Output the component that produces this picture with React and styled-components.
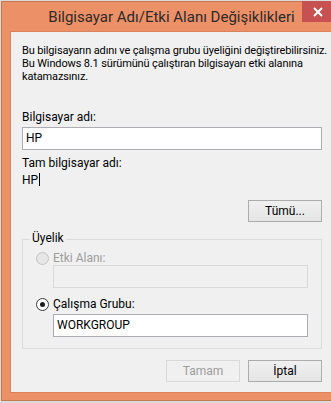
import React from 'react'
import styled, { createGlobalStyle } from 'styled-components'

const GlobalStyle = createGlobalStyle`
  html, body {
    margin: 0;
    padding: 0;
    background: #dadada;
    overflow: hidden;
  }
  body {
    font-family: Roboto, "Liberation Sans", Arial, sans-serif;
    font-size: 12px;
    color: #000;
  }
`

const Window = styled.div`
  position: relative;
  margin: 1px 0 0 1px;
  width: 341px;
  box-sizing: border-box;
  border: 1px solid #c9774f;
  background: #ec9068;
  padding: 0 8px 7px 8px;
  display: flex;
  flex-direction: column;
`

const TitleBar = styled.div`
  height: 29px;
  box-sizing: border-box;
  padding-top: 2px;
  line-height: 27px;
  text-align: center;
  font-size: 15px;
  color: #2e2a28;
  white-space: nowrap;
`

const CloseButton = styled.div`
  position: absolute;
  top: -1px;
  right: 7px;
  width: 32px;
  height: 21px;
  background: #c75050;
  display: flex;
  align-items: center;
  justify-content: center;
`

const Panel = styled.div`
  border: 1px solid #d9825b;
  background: #f0f0f0;
  padding: 12px 9px 10px 11px;
  display: flex;
  flex-direction: column;
  width: 300px;
`

const Intro = styled.div`
  font-size: 11px;
  letter-spacing: -0.14px;
  line-height: 13px;
  white-space: nowrap;
`

const Label = styled.div`
  margin-top: ${p => p.$top || 0}px;
  line-height: 13px;
  white-space: nowrap;
  color: ${p => (p.$disabled ? '#9d9d9d' : '#000')};
`

const TextBox = styled.div`
  margin-top: ${p => p.$top || 0}px;
  margin-left: ${p => p.$left || 0}px;
  width: ${p => p.$width}px;
  height: 23px;
  box-sizing: border-box;
  border: 1px solid ${p => (p.$disabled ? '#d9d9d9' : '#abadb3')};
  background: ${p => (p.$disabled ? '#f0f0f0' : '#fff')};
  padding: 0 3px;
  line-height: 21px;
`

const Caret = styled.span`
  display: inline-block;
  width: 1px;
  height: 13px;
  background: #000;
  vertical-align: -2px;
  margin-left: 1px;
`

const ButtonRow = styled.div`
  margin-top: ${p => p.$top || 0}px;
  display: flex;
  justify-content: flex-end;
  gap: 8px;
`

const Button = styled.div`
  width: 74px;
  height: 22px;
  box-sizing: border-box;
  border: 1px solid ${p => (p.$disabled ? '#d9d9d9' : '#acacac')};
  background: ${p => (p.$disabled ? '#f0f0f0' : 'linear-gradient(#f0f0f0, #e5e5e5)')};
  color: ${p => (p.$disabled ? '#9d9d9d' : '#000')};
  text-align: center;
  line-height: 20px;
`

const GroupBox = styled.div`
  position: relative;
  margin-top: 17px;
  border: 1px solid #dcdcdc;
  padding: 12px 0 11px 13px;
  display: flex;
  flex-direction: column;
`

const Legend = styled.div`
  position: absolute;
  top: -8px;
  left: 7px;
  padding: 0 2px;
  background: #f0f0f0;
  line-height: 13px;
`

const RadioRow = styled.div`
  margin-top: ${p => p.$top || 0}px;
  display: flex;
  align-items: center;
  gap: 4px;
  height: 13px;
`

const Radio = styled.span`
  width: 13px;
  height: 13px;
  box-sizing: border-box;
  border-radius: 50%;
  border: 1px solid ${p => (p.$disabled ? '#c4c4c4' : '#3c3c3c')};
  background: ${p => (p.$disabled ? '#e6e6e6' : '#fff')};
  display: flex;
  align-items: center;
  justify-content: center;
  flex: none;

  &::after {
    content: '';
    display: ${p => (p.$checked ? 'block' : 'none')};
    width: 5px;
    height: 5px;
    border-radius: 50%;
    background: #1c1c1c;
  }
`

const CloseIcon = () => (
  <svg width="10" height="10" viewBox="0 0 10 10">
    <path d="M1 1 L9 9 M9 1 L1 9" stroke="#fff" strokeWidth="1.9" />
  </svg>
)

export default function App() {
  return (
    <>
      <GlobalStyle />
      <Window>
        <TitleBar>Bilgisayar Adı/Etki Alanı Değişiklikleri</TitleBar>
        <CloseButton>
          <CloseIcon />
        </CloseButton>
        <Panel>
          <Intro>
            Bu bilgisayarın adını ve çalışma grubu üyeliğini değiştirebilirsiniz.
            <br />
            Bu Windows 8.1 sürümünü çalıştıran bilgisayarı etki alanına
            <br />
            katamazsınız.
          </Intro>

          <Label $top={28}>Bilgisayar adı:</Label>
          <TextBox $top={3} $width={300}>HP</TextBox>

          <Label $top={7}>Tam bilgisayar adı:</Label>
          <Label $top={3}>
            HP<Caret />
          </Label>

          <ButtonRow $top={13}>
            <Button>Tümü...</Button>
          </ButtonRow>

          <GroupBox>
            <Legend>Üyelik</Legend>
            <RadioRow>
              <Radio $disabled />
              <Label $disabled>Etki Alanı:</Label>
            </RadioRow>
            <TextBox $disabled $left={17} $width={255} />
            <RadioRow $top={10}>
              <Radio $checked />
              <Label>Çalışma Grubu:</Label>
            </RadioRow>
            <TextBox $top={3} $left={17} $width={255}>WORKGROUP</TextBox>
          </GroupBox>

          <ButtonRow $top={11}>
            <Button $disabled>Tamam</Button>
            <Button>İptal</Button>
          </ButtonRow>
        </Panel>
      </Window>
    </>
  )
}
